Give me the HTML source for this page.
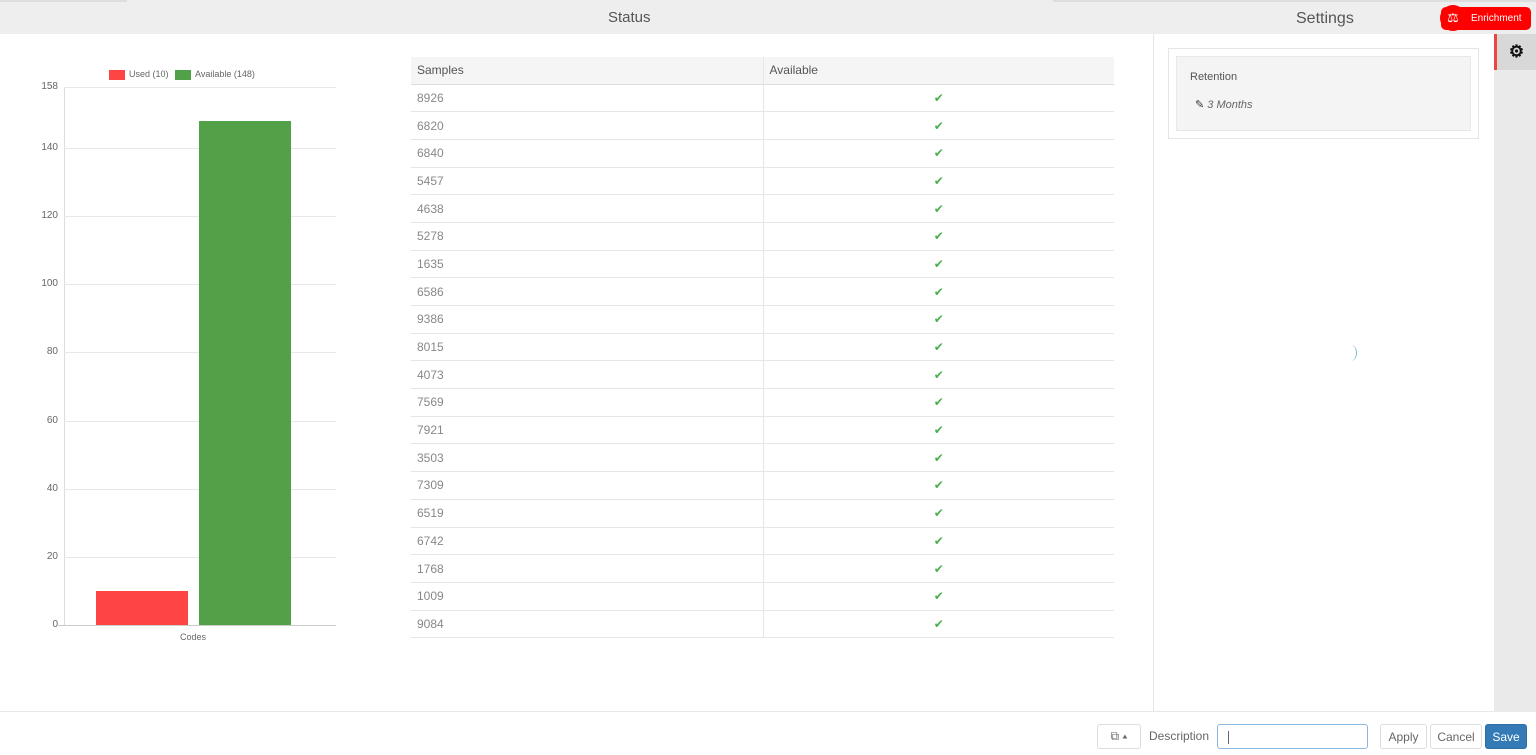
<!DOCTYPE html>
<html><head><style>
*{box-sizing:border-box;margin:0;padding:0}
body{width:1536px;height:755px;position:relative;overflow:hidden;background:#fff;font-family:"Liberation Sans",sans-serif;color:#555}
.abs{position:absolute}
.hdr{left:0;top:0;width:1536px;height:34px;background:#eeeeee}
.t{font-size:15px;color:#555;}
.ax{font-size:10px;color:#666;text-align:right;width:30px}
.grid{height:1px;background:#e8e8e8;left:64px;width:272px}
table{border-collapse:collapse;font-size:12px}
td{height:27.7px;border-bottom:1px solid #e6e6e6;padding-left:6px;color:#888}
td+td{border-left:1px solid #e6e6e6;text-align:center;color:#4caf50;padding:0}
th{height:27px;text-align:left;font-weight:normal;padding-left:6px;background:#f5f5f5;border-bottom:1px solid #ddd;color:#555}
th+th{border-left:1px solid #e6e6e6}
.btn{border:1px solid #ddd;border-radius:3px;height:25px;font-size:12px;color:#666;display:flex;align-items:center;justify-content:center;background:#fff}
</style></head><body>
<div class="abs hdr"></div>
<div class="abs" style="left:0;top:0;width:127px;height:2px;background:#ddd"></div>
<div class="abs" style="left:1053px;top:0;width:483px;height:2px;background:#ddd"></div>
<div class="abs t" style="left:608px;top:9px">Status</div>
<div class="abs" style="left:1296px;top:10px;font-size:16px;color:#555">Settings</div>
<div class="abs" style="left:1441px;top:7px;width:90px;height:23px;background:#f00;border-radius:5px"></div>
<div class="abs" style="left:1440px;top:5px;width:26px;height:26px;background:#f00;border-radius:50%;color:#fff;font-size:13px;text-align:center;line-height:26px">⚖</div>
<div class="abs" style="left:1471px;top:13px;font-size:10px;color:#fff">Enrichment</div>

<div class="abs" style="left:109px;top:70px;width:16px;height:10px;background:#f44"></div>
<div class="abs" style="left:129px;top:69px;font-size:9px;color:#666">Used (10)</div>
<div class="abs" style="left:175px;top:70px;width:16px;height:10px;background:#52a047"></div>
<div class="abs" style="left:195px;top:69px;font-size:9px;color:#666">Available (148)</div>
<div class="abs" style="left:64px;top:87px;width:1px;height:539px;background:#ddd"></div>
<div class="abs grid" style="top:87px"></div><div class="abs ax" style="left:28px;top:81px">158</div>
<div class="abs grid" style="top:148px"></div><div class="abs ax" style="left:28px;top:142px">140</div>
<div class="abs grid" style="top:216px"></div><div class="abs ax" style="left:28px;top:210px">120</div>
<div class="abs grid" style="top:284px"></div><div class="abs ax" style="left:28px;top:278px">100</div>
<div class="abs grid" style="top:352px"></div><div class="abs ax" style="left:28px;top:346px">80</div>
<div class="abs grid" style="top:421px"></div><div class="abs ax" style="left:28px;top:415px">60</div>
<div class="abs grid" style="top:489px"></div><div class="abs ax" style="left:28px;top:483px">40</div>
<div class="abs grid" style="top:557px"></div><div class="abs ax" style="left:28px;top:551px">20</div>
<div class="abs" style="left:58px;top:625px;width:278px;height:1px;background:#ccc"></div><div class="abs ax" style="left:28px;top:619px">0</div>
<div class="abs" style="left:96px;top:591px;width:92px;height:34px;background:#f44"></div>
<div class="abs" style="left:199px;top:121px;width:92px;height:504px;background:#52a047"></div>
<div class="abs" style="left:180px;top:632px;font-size:9px;color:#666">Codes</div>

<table class="abs" style="left:411px;top:57px;width:703px">
<tr><th style="width:352px">Samples</th><th>Available</th></tr>
<tr><td>8926</td><td>✔</td></tr><tr><td>6820</td><td>✔</td></tr><tr><td>6840</td><td>✔</td></tr><tr><td>5457</td><td>✔</td></tr><tr><td>4638</td><td>✔</td></tr><tr><td>5278</td><td>✔</td></tr><tr><td>1635</td><td>✔</td></tr><tr><td>6586</td><td>✔</td></tr><tr><td>9386</td><td>✔</td></tr><tr><td>8015</td><td>✔</td></tr><tr><td>4073</td><td>✔</td></tr><tr><td>7569</td><td>✔</td></tr><tr><td>7921</td><td>✔</td></tr><tr><td>3503</td><td>✔</td></tr><tr><td>7309</td><td>✔</td></tr><tr><td>6519</td><td>✔</td></tr><tr><td>6742</td><td>✔</td></tr><tr><td>1768</td><td>✔</td></tr><tr><td>1009</td><td>✔</td></tr><tr><td>9084</td><td>✔</td></tr>
</table>

<div class="abs" style="left:1153px;top:34px;width:1px;height:677px;background:#e5e5e5"></div>
<div class="abs" style="left:1168px;top:48px;width:311px;height:91px;border:1px solid #e5e5e5"></div>
<div class="abs" style="left:1176px;top:56px;width:295px;height:75px;background:#f4f4f4;border:1px solid #e8e8e8"></div>
<div class="abs" style="left:1190px;top:71px;font-size:11px;color:#555">Retention</div>
<div class="abs" style="left:1195px;top:98px;font-size:11px;color:#666;font-style:italic"><span style="color:#333;font-style:normal">✎</span> 3 Months</div>
<div class="abs" style="left:1345px;top:345px;width:12px;height:16px;border-right:1px solid #7bc;border-radius:50%"></div>
<div class="abs" style="left:1494px;top:34px;width:42px;height:677px;background:#eaeaea"></div>
<div class="abs" style="left:1494px;top:34px;width:42px;height:36px;background:#d8d8d8;border-left:3px solid #e44;text-align:center;line-height:36px;font-size:17px;font-weight:bold;color:#111">⚙</div>

<div class="abs" style="left:0;top:711px;width:1536px;height:1px;background:#e8e8e8"></div>
<div class="abs btn" style="left:1097px;top:724px;width:44px">⧉ ▴</div>
<div class="abs" style="left:1149px;top:729px;font-size:12px;color:#666">Description</div>
<div class="abs" style="left:1217px;top:724px;width:151px;height:25px;border:1px solid #8cb7e0;border-radius:3px;background:#fff"><div style="margin:6px 0 0 10px;width:1px;height:13px;background:#666"></div></div>
<div class="abs btn" style="left:1380px;top:724px;width:47px">Apply</div>
<div class="abs btn" style="left:1430px;top:724px;width:52px">Cancel</div>
<div class="abs btn" style="left:1485px;top:724px;width:42px;background:#337ab7;border-color:#2e6da4;color:#fff">Save</div>
</body></html>
